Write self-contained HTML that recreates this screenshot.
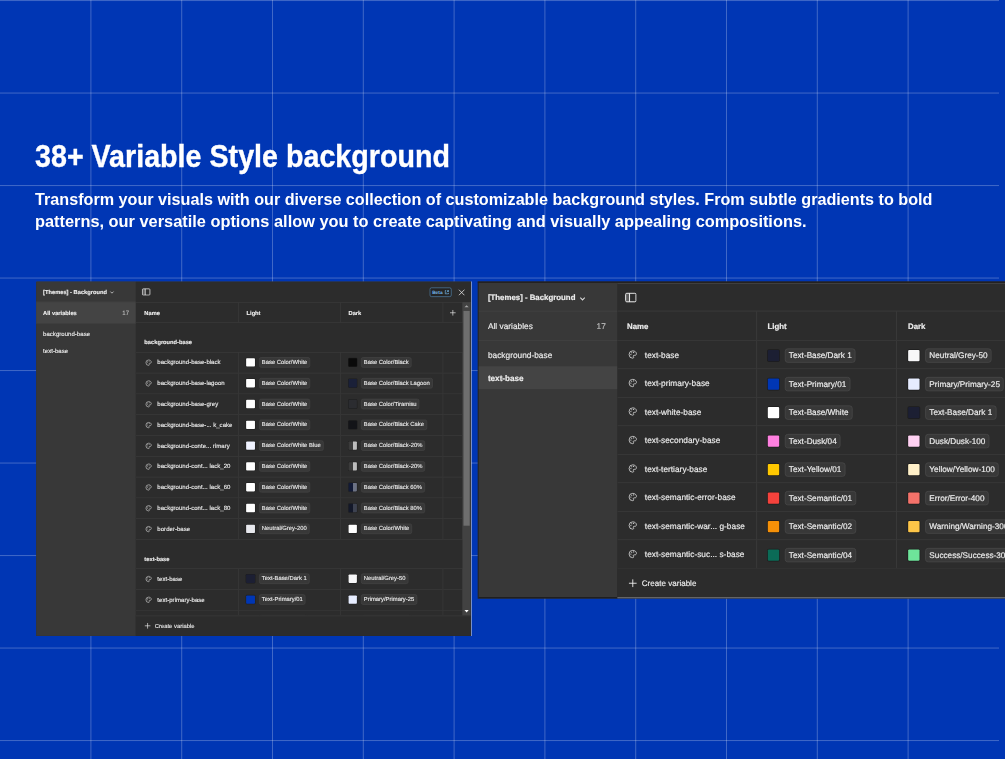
<!DOCTYPE html>
<html lang="en"><head><meta charset="utf-8"><title>38+ Variable Style background</title>
<style>
html,body{margin:0;padding:0}
body{width:1005px;height:759px;background:#0036b4;position:relative;overflow:hidden;font-family:"Liberation Sans",sans-serif;color:#fff}
.grid{position:absolute;left:0;top:0}
.grid rect{fill:#fff;fill-opacity:.25}
h1{position:absolute;left:35px;top:138.5px;-webkit-text-stroke:.35px #fff;margin:0;font-size:30.7px;line-height:36px;font-weight:bold;white-space:nowrap;transform-origin:0 0;transform:scaleX(.934)}
.sub{position:absolute;left:35px;top:188.5px;margin:0;font-size:17px;line-height:22px;font-weight:bold;white-space:nowrap;transform-origin:0 0;transform:scaleX(.951)}
.sub.l2{top:210.5px;transform:scaleX(.962)}

.panel{filter:brightness(1.002);text-rendering:geometricPrecision;position:absolute;display:flex;background:#2c2c2c;color:#ededed;font-size:11.6px;letter-spacing:.05px;overflow:hidden;box-sizing:border-box;left:0;top:0;transform-origin:0 0;transform:translate(var(--tx),var(--ty)) scale(var(--s))}
.panel b{font-weight:bold;font-size:11px;letter-spacing:0}
.panel .side{background:#383838;flex:none;width:var(--sw);position:relative}
.panel .main{background:#2c2c2c;flex:1;position:relative;min-width:0}
.panel .hd{height:var(--hh);display:flex;align-items:center;box-sizing:border-box;border-bottom:1px solid #3e3e3e;position:relative}
.side .hd{padding-left:var(--pl);border-bottom-color:#444}
.chev{width:10px;height:10px;margin-left:4.5px;position:relative;top:calc(var(--bo) + .3px)}
.all{height:var(--ch);display:flex;align-items:center;padding-left:var(--pl);box-sizing:border-box;border-bottom:1px solid #444}
.all.sel{background:#444}
.cnt{margin-left:auto;margin-right:var(--cr);color:#bcbcbc}
.grp{height:var(--gh);display:flex;align-items:center;padding-left:var(--pl);box-sizing:border-box}
.grp.first{margin-top:var(--gm)}
.grp.sel{background:#444}
.grp.sel b{font-size:11.4px}
.sbi{width:17.5px;height:15px;margin-left:10px}
.cols{height:var(--mch,var(--ch));display:flex;box-sizing:border-box;border-bottom:1px solid #3e3e3e}
.c{flex:none;width:var(--cw);box-sizing:border-box;display:flex;align-items:center;padding-left:14.5px;border-right:1px solid #3e3e3e;white-space:nowrap;overflow:hidden}
.c.name{width:var(--nw);padding-left:var(--np)}
.c.plus{width:var(--pw);padding:0;justify-content:center}
.row{height:var(--rh);display:flex;box-sizing:border-box;border-bottom:1px solid #3e3e3e}
.gh{height:var(--ghh);box-sizing:border-box;border-bottom:1px solid #3e3e3e;display:flex;align-items:flex-end;padding:0 0 13px 16px}
.ic{width:15px;height:15px;flex:none;margin:0 9px 0 1px}
.t{position:relative;top:var(--to);-webkit-text-stroke:.22px currentColor}
.panel b.t{top:var(--bo);-webkit-text-stroke:.25px currentColor}
.sw{width:16px;height:16px;flex:none;margin-right:8px;border-radius:1.5px;box-shadow:0 0 0 1px rgba(0,0,0,.35)}
.pill{background:#383838;border:1px solid #4a4a4a;border-radius:4px;height:20px;line-height:18px;padding:0 var(--pr,5.5px) 0 var(--pp,5.5px);font-size:var(--pf);letter-spacing:0;box-sizing:border-box;display:inline-block}
.pl{width:13px;height:13px}
.foot{position:absolute;left:0;right:0;bottom:0;height:var(--fh);display:flex;align-items:center;padding-left:16px;background:#2c2c2c;box-sizing:border-box}
.foot span{margin-left:8px}
.body{overflow:hidden}

.L{--s:.52;--pr:4.5px;--pp:4.4px;--mch:39.2px;--pf:11.25px;--np:16px;--to:0px;--bo:1.2px;--sw:192.3px;--hh:40px;--ch:41px;--gh:32px;--gm:3.5px;--pl:13.5px;--cr:13.5px;--nw:198px;--cw:196.2px;--pw:38.6px;--rh:40px;--ghh:56.9px;--fh:38.6px;--tx:36.05px;--ty:281.3px;width:837.2px;height:681.5px;border-right:1.500px solid #1a1a1a;border-radius:2px 0 0 0;box-shadow:1px 0 0 0 rgba(215,225,250,.75)}
.L .body{height:561.5px}
.L .foot{border-top:1px solid #3e3e3e;font-size:11.2px}
.L .foot span{margin-left:7px}
.beta{margin-left:auto;color:#74b8ea;border:1.5px solid #5e9fd2;border-radius:3.5px;font-size:9.2px;padding:0 3px 0 4px;height:18.6px;line-height:16px;background:#242424;position:relative;top:.9px;display:flex;align-items:center;font-weight:bold;box-sizing:border-box}
.beta svg{width:10px;height:10px;margin-left:3px}
.x{width:13px;height:13px;margin:0 11.7px 0 12.7px;position:relative;top:1px}
.scroll{position:absolute;right:0;top:var(--hh);width:16px;bottom:var(--fh);background:#424242}
.scroll .thumb{position:absolute;left:2px;right:2px;top:17px;height:413px;background:#6e6e6e}
.scroll .up,.scroll .dn{position:absolute;left:4px;width:0;height:0;border:4px solid transparent}
.scroll .up{top:6px;border-top:0;border-bottom:4.5px solid #a8a8a8}
.scroll .dn{bottom:6.2px;border-bottom:0;border-top:5px solid #fff}

.R{--s:.7125;--pr:4.6px;--pp:5px;--pf:11.5px;--np:13.8px;--to:1.1px;--bo:1.9px;--sw:194.6px;--hh:40px;--ch:41.3px;--gh:31.5px;--gm:4.3px;--pl:13.2px;--cr:16px;--nw:196.5px;--cw:195.7px;--pw:40px;--rh:40px;--ghh:56px;--fh:40px;--tx:477.8px;--ty:281.5px;width:760px;height:445px;border-top:2px solid #242120;border-left:1px solid #222}
.R .main .hd{border-top:1.4px solid #4a4a4a}
.R .main{border-bottom:2px solid #7a7a7a}
.R .side{border-bottom:2px solid #1c1c1c}
.R .foot{padding-left:15px;font-size:11.2px}
.R .foot span{margin-left:6.6px}
.R .c:nth-child(3){padding-left:16px}
.R .sbi{position:relative;top:.3px}
.L .sbi{position:relative;top:.5px;margin-left:11px}
.R .sw,.R .pill{margin-top:1.6px}
.L .main .hd{height:41.1px}
.L .gh+.row~.gh{height:55.9px;padding-bottom:13.6px}
.L .grp .t{top:1.5px}
.L .sw{width:16.8px;height:16.8px;margin:-1.2px 7.6px 0 -.4px}
.L .pill{margin-top:-1.2px}

</style></head>
<body>
<svg class="grid" width="1005" height="759" viewBox="0 0 1005 759"><rect x="90.40" y="0" width="1" height="759"/><rect x="181.20" y="0" width="1" height="759"/><rect x="272.00" y="0" width="1" height="759"/><rect x="362.80" y="0" width="1" height="759"/><rect x="453.60" y="0" width="1" height="759"/><rect x="544.40" y="0" width="1" height="759"/><rect x="635.20" y="0" width="1" height="759"/><rect x="726.00" y="0" width="1" height="759"/><rect x="816.80" y="0" width="1" height="759"/><rect x="907.60" y="0" width="1" height="759"/><rect x="0" y="0.05" width="999" height="1"/><rect x="0" y="92.55" width="999" height="1"/><rect x="0" y="185.05" width="999" height="1"/><rect x="0" y="277.55" width="999" height="1"/><rect x="0" y="370.05" width="999" height="1"/><rect x="0" y="462.55" width="999" height="1"/><rect x="0" y="555.05" width="999" height="1"/><rect x="0" y="647.55" width="999" height="1"/><rect x="0" y="740.05" width="999" height="1"/></svg>
<h1>38+ Variable Style background</h1>
<p class="sub">Transform your visuals with our diverse collection of customizable background styles. From subtle gradients to bold</p>
<p class="sub l2">patterns, our versatile options allow you to create captivating and visually appealing compositions.</p>

<div class="panel L">
  <div class="side">
    <div class="hd"><b class="t">[Themes] - Background</b><svg class="chev" viewBox="0 0 8 8"><path d="M1.500 3l2.500 2.500L6.500 3" fill="none" stroke="#d8d8d8" stroke-width="1.200"/></svg></div>
    <div class="all sel"><b class="t">All variables</b><span class="cnt t">17</span></div>
    <div class="grp first"><span class="t">background-base</span></div>
    <div class="grp"><span class="t">text-base</span></div>
  </div>
  <div class="main">
    <div class="hd"><svg class="sbi" viewBox="0 0 17.500 15"><rect x="1.500" y="1.500" width="14.500" height="12" rx="1.600" fill="none" stroke="#f0f0f0" stroke-width="1.400"/><path d="M2 2h5v11H2z" fill="#f0f0f0" fill-opacity=".25"/><path d="M7 1.500v12" stroke="#f0f0f0" stroke-width="1.400"/></svg><span class="beta">Beta<svg viewBox="0 0 8 8"><path d="M3 1.500H1.500v5h5V5M4.500 1.500h2v2M6.500 1.500L3.800 4.200" fill="none" stroke="#74b8ea" stroke-width="1.100"/></svg></span><svg class="x" viewBox="0 0 13 13"><path d="M1 1l11 11M12 1L1 12" stroke="#f2f2f2" stroke-width="1.400"/></svg></div>
    <div class="cols"><div class="c name"><b class="t">Name</b></div><div class="c"><b class="t">Light</b></div><div class="c"><b class="t">Dark</b></div><div class="c plus"><svg class="pl" viewBox="0 0 12 12"><path d="M6 1v10M1 6h10" stroke="#f0f0f0" stroke-width="1.150"/></svg></div></div>
    <div class="body">
      <div class="gh"><b class="t">background-base</b></div>
      <div class="row"><div class="c name"><svg class="ic" viewBox="0 0 16 16"><path d="M8 2.5a5.5 5.5 0 1 0 0 11c.9 0 1.4-.6 1.4-1.3 0-.4-.2-.7-.4-1-.2-.3-.3-.5-.3-.8 0-.7.6-1.2 1.300-1.200h1.300c1.300 0 2.200-1 2.200-2.300C13.500 4.400 11 2.500 8 2.500z" fill="none" stroke="#d4d4d4" stroke-width="1.250"/><circle cx="5.200" cy="8" r=".9" fill="#d4d4d4"/><circle cx="6.400" cy="5.300" r=".9" fill="#d4d4d4"/><circle cx="9.300" cy="4.800" r=".9" fill="#d4d4d4"/></svg><span class="t">background-base-black</span></div><div class="c"><span class="sw" style="background:#fff"></span><span class="pill"><span class="t">Base Color/White</span></span></div><div class="c"><span class="sw" style="background:#0a0a0a"></span><span class="pill"><span class="t">Base Color/Black</span></span></div><div class="c plus"></div></div><div class="row"><div class="c name"><svg class="ic" viewBox="0 0 16 16"><path d="M8 2.5a5.5 5.5 0 1 0 0 11c.9 0 1.4-.6 1.4-1.3 0-.4-.2-.7-.4-1-.2-.3-.3-.5-.3-.8 0-.7.6-1.2 1.300-1.200h1.300c1.300 0 2.200-1 2.200-2.300C13.500 4.400 11 2.500 8 2.500z" fill="none" stroke="#d4d4d4" stroke-width="1.250"/><circle cx="5.200" cy="8" r=".9" fill="#d4d4d4"/><circle cx="6.400" cy="5.300" r=".9" fill="#d4d4d4"/><circle cx="9.300" cy="4.800" r=".9" fill="#d4d4d4"/></svg><span class="t">background-base-lagoon</span></div><div class="c"><span class="sw" style="background:#fff"></span><span class="pill"><span class="t">Base Color/White</span></span></div><div class="c"><span class="sw" style="background:#1a2038"></span><span class="pill"><span class="t">Base Color/Black Lagoon</span></span></div><div class="c plus"></div></div><div class="row"><div class="c name"><svg class="ic" viewBox="0 0 16 16"><path d="M8 2.5a5.5 5.5 0 1 0 0 11c.9 0 1.4-.6 1.4-1.3 0-.4-.2-.7-.4-1-.2-.3-.3-.5-.3-.8 0-.7.6-1.2 1.300-1.200h1.300c1.300 0 2.200-1 2.200-2.300C13.500 4.400 11 2.500 8 2.500z" fill="none" stroke="#d4d4d4" stroke-width="1.250"/><circle cx="5.200" cy="8" r=".9" fill="#d4d4d4"/><circle cx="6.400" cy="5.300" r=".9" fill="#d4d4d4"/><circle cx="9.300" cy="4.800" r=".9" fill="#d4d4d4"/></svg><span class="t">background-base-grey</span></div><div class="c"><span class="sw" style="background:#fff"></span><span class="pill"><span class="t">Base Color/White</span></span></div><div class="c"><span class="sw" style="background:#2b2c30"></span><span class="pill"><span class="t">Base Color/Tiramisu</span></span></div><div class="c plus"></div></div><div class="row"><div class="c name"><svg class="ic" viewBox="0 0 16 16"><path d="M8 2.5a5.5 5.5 0 1 0 0 11c.9 0 1.4-.6 1.4-1.3 0-.4-.2-.7-.4-1-.2-.3-.3-.5-.3-.8 0-.7.6-1.2 1.300-1.200h1.300c1.300 0 2.200-1 2.200-2.300C13.500 4.400 11 2.500 8 2.500z" fill="none" stroke="#d4d4d4" stroke-width="1.250"/><circle cx="5.200" cy="8" r=".9" fill="#d4d4d4"/><circle cx="6.400" cy="5.300" r=".9" fill="#d4d4d4"/><circle cx="9.300" cy="4.800" r=".9" fill="#d4d4d4"/></svg><span class="t">background-base-... k_cake</span></div><div class="c"><span class="sw" style="background:#fff"></span><span class="pill"><span class="t">Base Color/White</span></span></div><div class="c"><span class="sw" style="background:#131418"></span><span class="pill"><span class="t">Base Color/Black Cake</span></span></div><div class="c plus"></div></div><div class="row"><div class="c name"><svg class="ic" viewBox="0 0 16 16"><path d="M8 2.5a5.5 5.5 0 1 0 0 11c.9 0 1.4-.6 1.4-1.3 0-.4-.2-.7-.4-1-.2-.3-.3-.5-.3-.8 0-.7.6-1.2 1.300-1.200h1.300c1.300 0 2.200-1 2.200-2.300C13.500 4.400 11 2.500 8 2.500z" fill="none" stroke="#d4d4d4" stroke-width="1.250"/><circle cx="5.200" cy="8" r=".9" fill="#d4d4d4"/><circle cx="6.400" cy="5.300" r=".9" fill="#d4d4d4"/><circle cx="9.300" cy="4.800" r=".9" fill="#d4d4d4"/></svg><span class="t">background-conte... rimary</span></div><div class="c"><span class="sw" style="background:#f0f3ff"></span><span class="pill"><span class="t">Base Color/White Blue</span></span></div><div class="c"><span class="sw" style="background:linear-gradient(90deg,#3b3b3b 50%,#bcbcbc 50%)"></span><span class="pill"><span class="t">Base Color/Black-20%</span></span></div><div class="c plus"></div></div><div class="row"><div class="c name"><svg class="ic" viewBox="0 0 16 16"><path d="M8 2.5a5.5 5.5 0 1 0 0 11c.9 0 1.4-.6 1.4-1.3 0-.4-.2-.7-.4-1-.2-.3-.3-.5-.3-.8 0-.7.6-1.2 1.300-1.200h1.300c1.300 0 2.200-1 2.200-2.300C13.500 4.400 11 2.500 8 2.500z" fill="none" stroke="#d4d4d4" stroke-width="1.250"/><circle cx="5.200" cy="8" r=".9" fill="#d4d4d4"/><circle cx="6.400" cy="5.300" r=".9" fill="#d4d4d4"/><circle cx="9.300" cy="4.800" r=".9" fill="#d4d4d4"/></svg><span class="t">background-cont... lack_20</span></div><div class="c"><span class="sw" style="background:#fff"></span><span class="pill"><span class="t">Base Color/White</span></span></div><div class="c"><span class="sw" style="background:linear-gradient(90deg,#3b3b3b 50%,#bcbcbc 50%)"></span><span class="pill"><span class="t">Base Color/Black-20%</span></span></div><div class="c plus"></div></div><div class="row"><div class="c name"><svg class="ic" viewBox="0 0 16 16"><path d="M8 2.5a5.5 5.5 0 1 0 0 11c.9 0 1.4-.6 1.4-1.3 0-.4-.2-.7-.4-1-.2-.3-.3-.5-.3-.8 0-.7.6-1.2 1.300-1.200h1.300c1.300 0 2.200-1 2.200-2.300C13.500 4.400 11 2.500 8 2.500z" fill="none" stroke="#d4d4d4" stroke-width="1.250"/><circle cx="5.200" cy="8" r=".9" fill="#d4d4d4"/><circle cx="6.400" cy="5.300" r=".9" fill="#d4d4d4"/><circle cx="9.300" cy="4.800" r=".9" fill="#d4d4d4"/></svg><span class="t">background-cont... lack_60</span></div><div class="c"><span class="sw" style="background:#fff"></span><span class="pill"><span class="t">Base Color/White</span></span></div><div class="c"><span class="sw" style="background:linear-gradient(90deg,#121a36 50%,#6c7284 50%)"></span><span class="pill"><span class="t">Base Color/Black 60%</span></span></div><div class="c plus"></div></div><div class="row"><div class="c name"><svg class="ic" viewBox="0 0 16 16"><path d="M8 2.5a5.5 5.5 0 1 0 0 11c.9 0 1.4-.6 1.4-1.3 0-.4-.2-.7-.4-1-.2-.3-.3-.5-.3-.8 0-.7.6-1.2 1.300-1.200h1.300c1.300 0 2.200-1 2.200-2.300C13.500 4.400 11 2.500 8 2.500z" fill="none" stroke="#d4d4d4" stroke-width="1.250"/><circle cx="5.200" cy="8" r=".9" fill="#d4d4d4"/><circle cx="6.400" cy="5.300" r=".9" fill="#d4d4d4"/><circle cx="9.300" cy="4.800" r=".9" fill="#d4d4d4"/></svg><span class="t">background-cont... lack_80</span></div><div class="c"><span class="sw" style="background:#fff"></span><span class="pill"><span class="t">Base Color/White</span></span></div><div class="c"><span class="sw" style="background:linear-gradient(90deg,#131829 50%,#3d4250 50%)"></span><span class="pill"><span class="t">Base Color/Black 80%</span></span></div><div class="c plus"></div></div><div class="row"><div class="c name"><svg class="ic" viewBox="0 0 16 16"><path d="M8 2.5a5.5 5.5 0 1 0 0 11c.9 0 1.4-.6 1.4-1.3 0-.4-.2-.7-.4-1-.2-.3-.3-.5-.3-.8 0-.7.6-1.2 1.300-1.200h1.300c1.300 0 2.200-1 2.200-2.300C13.500 4.400 11 2.500 8 2.500z" fill="none" stroke="#d4d4d4" stroke-width="1.250"/><circle cx="5.200" cy="8" r=".9" fill="#d4d4d4"/><circle cx="6.400" cy="5.300" r=".9" fill="#d4d4d4"/><circle cx="9.300" cy="4.800" r=".9" fill="#d4d4d4"/></svg><span class="t">border-base</span></div><div class="c"><span class="sw" style="background:#e8e9ee"></span><span class="pill"><span class="t">Neutral/Grey-200</span></span></div><div class="c"><span class="sw" style="background:#fff"></span><span class="pill"><span class="t">Base Color/White</span></span></div><div class="c plus"></div></div>
      <div class="gh"><b class="t">text-base</b></div>
      <div class="row"><div class="c name"><svg class="ic" viewBox="0 0 16 16"><path d="M8 2.5a5.5 5.5 0 1 0 0 11c.9 0 1.4-.6 1.4-1.3 0-.4-.2-.7-.4-1-.2-.3-.3-.5-.3-.8 0-.7.6-1.2 1.300-1.200h1.300c1.300 0 2.200-1 2.200-2.300C13.500 4.400 11 2.500 8 2.500z" fill="none" stroke="#d4d4d4" stroke-width="1.250"/><circle cx="5.200" cy="8" r=".9" fill="#d4d4d4"/><circle cx="6.400" cy="5.300" r=".9" fill="#d4d4d4"/><circle cx="9.300" cy="4.800" r=".9" fill="#d4d4d4"/></svg><span class="t">text-base</span></div><div class="c"><span class="sw" style="background:#1c1f33"></span><span class="pill"><span class="t">Text-Base/Dark 1</span></span></div><div class="c"><span class="sw" style="background:#f7f7f8"></span><span class="pill"><span class="t">Neutral/Grey-50</span></span></div><div class="c plus"></div></div><div class="row"><div class="c name"><svg class="ic" viewBox="0 0 16 16"><path d="M8 2.5a5.5 5.5 0 1 0 0 11c.9 0 1.4-.6 1.4-1.3 0-.4-.2-.7-.4-1-.2-.3-.3-.5-.3-.8 0-.7.6-1.2 1.300-1.200h1.300c1.300 0 2.200-1 2.200-2.300C13.500 4.400 11 2.500 8 2.500z" fill="none" stroke="#d4d4d4" stroke-width="1.250"/><circle cx="5.200" cy="8" r=".9" fill="#d4d4d4"/><circle cx="6.400" cy="5.300" r=".9" fill="#d4d4d4"/><circle cx="9.300" cy="4.800" r=".9" fill="#d4d4d4"/></svg><span class="t">text-primary-base</span></div><div class="c"><span class="sw" style="background:#0036b4"></span><span class="pill"><span class="t">Text-Primary/01</span></span></div><div class="c"><span class="sw" style="background:#e6ecff"></span><span class="pill"><span class="t">Primary/Primary-25</span></span></div><div class="c plus"></div></div><div class="row"><div class="c name"><svg class="ic" viewBox="0 0 16 16"><path d="M8 2.5a5.5 5.5 0 1 0 0 11c.9 0 1.4-.6 1.4-1.3 0-.4-.2-.7-.4-1-.2-.3-.3-.5-.3-.8 0-.7.6-1.2 1.300-1.200h1.300c1.300 0 2.200-1 2.200-2.300C13.500 4.400 11 2.500 8 2.500z" fill="none" stroke="#d4d4d4" stroke-width="1.250"/><circle cx="5.200" cy="8" r=".9" fill="#d4d4d4"/><circle cx="6.400" cy="5.300" r=".9" fill="#d4d4d4"/><circle cx="9.300" cy="4.800" r=".9" fill="#d4d4d4"/></svg><span class="t">text-white-base</span></div><div class="c"><span class="sw" style="background:#fff"></span><span class="pill"><span class="t">Text-Base/White</span></span></div><div class="c"><span class="sw" style="background:#1c1f33"></span><span class="pill"><span class="t">Text-Base/Dark 1</span></span></div><div class="c plus"></div></div>
    </div>
    <div class="scroll"><i class="up"></i><i class="thumb"></i><i class="dn"></i></div>
    <div class="foot"><svg class="pl" viewBox="0 0 12 12"><path d="M6 1v10M1 6h10" stroke="#f0f0f0" stroke-width="1.150"/></svg><span class="t">Create variable</span></div>
  </div>
</div>

<div class="panel R">
  <div class="side">
    <div class="hd"><b class="t">[Themes] - Background</b><svg class="chev" viewBox="0 0 8 8"><path d="M1.500 3l2.500 2.500L6.500 3" fill="none" stroke="#d8d8d8" stroke-width="1.200"/></svg></div>
    <div class="all"><span class="t">All variables</span><span class="cnt t">17</span></div>
    <div class="grp first"><span class="t">background-base</span></div>
    <div class="grp sel"><b class="t">text-base</b></div>
  </div>
  <div class="main">
    <div class="hd"><svg class="sbi" viewBox="0 0 17.500 15"><rect x="1.500" y="1.500" width="14.500" height="12" rx="1.600" fill="none" stroke="#f0f0f0" stroke-width="1.400"/><path d="M2 2h5v11H2z" fill="#f0f0f0" fill-opacity=".25"/><path d="M7 1.500v12" stroke="#f0f0f0" stroke-width="1.400"/></svg></div>
    <div class="cols"><div class="c name"><b class="t">Name</b></div><div class="c"><b class="t">Light</b></div><div class="c"><b class="t">Dark</b></div></div>
    <div class="body">
      <div class="row"><div class="c name"><svg class="ic" viewBox="0 0 16 16"><path d="M8 2.5a5.5 5.5 0 1 0 0 11c.9 0 1.4-.6 1.4-1.3 0-.4-.2-.7-.4-1-.2-.3-.3-.5-.3-.8 0-.7.6-1.2 1.300-1.200h1.300c1.300 0 2.200-1 2.200-2.300C13.500 4.400 11 2.500 8 2.500z" fill="none" stroke="#d4d4d4" stroke-width="1.250"/><circle cx="5.200" cy="8" r=".9" fill="#d4d4d4"/><circle cx="6.400" cy="5.300" r=".9" fill="#d4d4d4"/><circle cx="9.300" cy="4.800" r=".9" fill="#d4d4d4"/></svg><span class="t">text-base</span></div><div class="c"><span class="sw" style="background:#1c1f33"></span><span class="pill"><span class="t">Text-Base/Dark 1</span></span></div><div class="c"><span class="sw" style="background:#f7f7f8"></span><span class="pill"><span class="t">Neutral/Grey-50</span></span></div></div><div class="row"><div class="c name"><svg class="ic" viewBox="0 0 16 16"><path d="M8 2.5a5.5 5.5 0 1 0 0 11c.9 0 1.4-.6 1.4-1.3 0-.4-.2-.7-.4-1-.2-.3-.3-.5-.3-.8 0-.7.6-1.2 1.300-1.200h1.300c1.300 0 2.200-1 2.200-2.300C13.500 4.400 11 2.500 8 2.500z" fill="none" stroke="#d4d4d4" stroke-width="1.250"/><circle cx="5.200" cy="8" r=".9" fill="#d4d4d4"/><circle cx="6.400" cy="5.300" r=".9" fill="#d4d4d4"/><circle cx="9.300" cy="4.800" r=".9" fill="#d4d4d4"/></svg><span class="t">text-primary-base</span></div><div class="c"><span class="sw" style="background:#0036b4"></span><span class="pill"><span class="t">Text-Primary/01</span></span></div><div class="c"><span class="sw" style="background:#e6ecff"></span><span class="pill"><span class="t">Primary/Primary-25</span></span></div></div><div class="row"><div class="c name"><svg class="ic" viewBox="0 0 16 16"><path d="M8 2.5a5.5 5.5 0 1 0 0 11c.9 0 1.4-.6 1.4-1.3 0-.4-.2-.7-.4-1-.2-.3-.3-.5-.3-.8 0-.7.6-1.2 1.300-1.200h1.300c1.300 0 2.200-1 2.200-2.300C13.500 4.400 11 2.500 8 2.500z" fill="none" stroke="#d4d4d4" stroke-width="1.250"/><circle cx="5.200" cy="8" r=".9" fill="#d4d4d4"/><circle cx="6.400" cy="5.300" r=".9" fill="#d4d4d4"/><circle cx="9.300" cy="4.800" r=".9" fill="#d4d4d4"/></svg><span class="t">text-white-base</span></div><div class="c"><span class="sw" style="background:#fff"></span><span class="pill"><span class="t">Text-Base/White</span></span></div><div class="c"><span class="sw" style="background:#1c1f33"></span><span class="pill"><span class="t">Text-Base/Dark 1</span></span></div></div><div class="row"><div class="c name"><svg class="ic" viewBox="0 0 16 16"><path d="M8 2.5a5.5 5.5 0 1 0 0 11c.9 0 1.4-.6 1.4-1.3 0-.4-.2-.7-.4-1-.2-.3-.3-.5-.3-.8 0-.7.6-1.2 1.300-1.200h1.300c1.300 0 2.200-1 2.200-2.300C13.500 4.400 11 2.500 8 2.500z" fill="none" stroke="#d4d4d4" stroke-width="1.250"/><circle cx="5.200" cy="8" r=".9" fill="#d4d4d4"/><circle cx="6.400" cy="5.300" r=".9" fill="#d4d4d4"/><circle cx="9.300" cy="4.800" r=".9" fill="#d4d4d4"/></svg><span class="t">text-secondary-base</span></div><div class="c"><span class="sw" style="background:#ff80e0"></span><span class="pill"><span class="t">Text-Dusk/04</span></span></div><div class="c"><span class="sw" style="background:#ffd1f2"></span><span class="pill"><span class="t">Dusk/Dusk-100</span></span></div></div><div class="row"><div class="c name"><svg class="ic" viewBox="0 0 16 16"><path d="M8 2.5a5.5 5.5 0 1 0 0 11c.9 0 1.4-.6 1.4-1.3 0-.4-.2-.7-.4-1-.2-.3-.3-.5-.3-.8 0-.7.6-1.2 1.300-1.200h1.300c1.300 0 2.200-1 2.200-2.300C13.500 4.400 11 2.500 8 2.500z" fill="none" stroke="#d4d4d4" stroke-width="1.250"/><circle cx="5.200" cy="8" r=".9" fill="#d4d4d4"/><circle cx="6.400" cy="5.300" r=".9" fill="#d4d4d4"/><circle cx="9.300" cy="4.800" r=".9" fill="#d4d4d4"/></svg><span class="t">text-tertiary-base</span></div><div class="c"><span class="sw" style="background:#ffc800"></span><span class="pill"><span class="t">Text-Yellow/01</span></span></div><div class="c"><span class="sw" style="background:#fff0c8"></span><span class="pill"><span class="t">Yellow/Yellow-100</span></span></div></div><div class="row"><div class="c name"><svg class="ic" viewBox="0 0 16 16"><path d="M8 2.5a5.5 5.5 0 1 0 0 11c.9 0 1.4-.6 1.4-1.3 0-.4-.2-.7-.4-1-.2-.3-.3-.5-.3-.8 0-.7.6-1.2 1.300-1.200h1.300c1.300 0 2.200-1 2.200-2.300C13.500 4.400 11 2.500 8 2.500z" fill="none" stroke="#d4d4d4" stroke-width="1.250"/><circle cx="5.200" cy="8" r=".9" fill="#d4d4d4"/><circle cx="6.400" cy="5.300" r=".9" fill="#d4d4d4"/><circle cx="9.300" cy="4.800" r=".9" fill="#d4d4d4"/></svg><span class="t">text-semantic-error-base</span></div><div class="c"><span class="sw" style="background:#f5423c"></span><span class="pill"><span class="t">Text-Semantic/01</span></span></div><div class="c"><span class="sw" style="background:#f4726a"></span><span class="pill"><span class="t">Error/Error-400</span></span></div></div><div class="row"><div class="c name"><svg class="ic" viewBox="0 0 16 16"><path d="M8 2.5a5.5 5.5 0 1 0 0 11c.9 0 1.4-.6 1.4-1.3 0-.4-.2-.7-.4-1-.2-.3-.3-.5-.3-.8 0-.7.6-1.2 1.300-1.200h1.300c1.300 0 2.200-1 2.200-2.300C13.500 4.400 11 2.500 8 2.500z" fill="none" stroke="#d4d4d4" stroke-width="1.250"/><circle cx="5.200" cy="8" r=".9" fill="#d4d4d4"/><circle cx="6.400" cy="5.300" r=".9" fill="#d4d4d4"/><circle cx="9.300" cy="4.800" r=".9" fill="#d4d4d4"/></svg><span class="t">text-semantic-war... g-base</span></div><div class="c"><span class="sw" style="background:#f59008"></span><span class="pill"><span class="t">Text-Semantic/02</span></span></div><div class="c"><span class="sw" style="background:#fcc548"></span><span class="pill"><span class="t">Warning/Warning-300</span></span></div></div><div class="row"><div class="c name"><svg class="ic" viewBox="0 0 16 16"><path d="M8 2.5a5.5 5.5 0 1 0 0 11c.9 0 1.4-.6 1.4-1.3 0-.4-.2-.7-.4-1-.2-.3-.3-.5-.3-.8 0-.7.6-1.2 1.300-1.200h1.300c1.300 0 2.200-1 2.200-2.300C13.500 4.400 11 2.500 8 2.500z" fill="none" stroke="#d4d4d4" stroke-width="1.250"/><circle cx="5.200" cy="8" r=".9" fill="#d4d4d4"/><circle cx="6.400" cy="5.300" r=".9" fill="#d4d4d4"/><circle cx="9.300" cy="4.800" r=".9" fill="#d4d4d4"/></svg><span class="t">text-semantic-suc... s-base</span></div><div class="c"><span class="sw" style="background:#0b6b57"></span><span class="pill"><span class="t">Text-Semantic/04</span></span></div><div class="c"><span class="sw" style="background:#6ee49a"></span><span class="pill"><span class="t">Success/Success-300</span></span></div></div>
    </div>
    <div class="foot"><svg class="pl" viewBox="0 0 12 12"><path d="M6 1v10M1 6h10" stroke="#f0f0f0" stroke-width="1.150"/></svg><span class="t">Create variable</span></div>
  </div>
</div>
</body></html>
